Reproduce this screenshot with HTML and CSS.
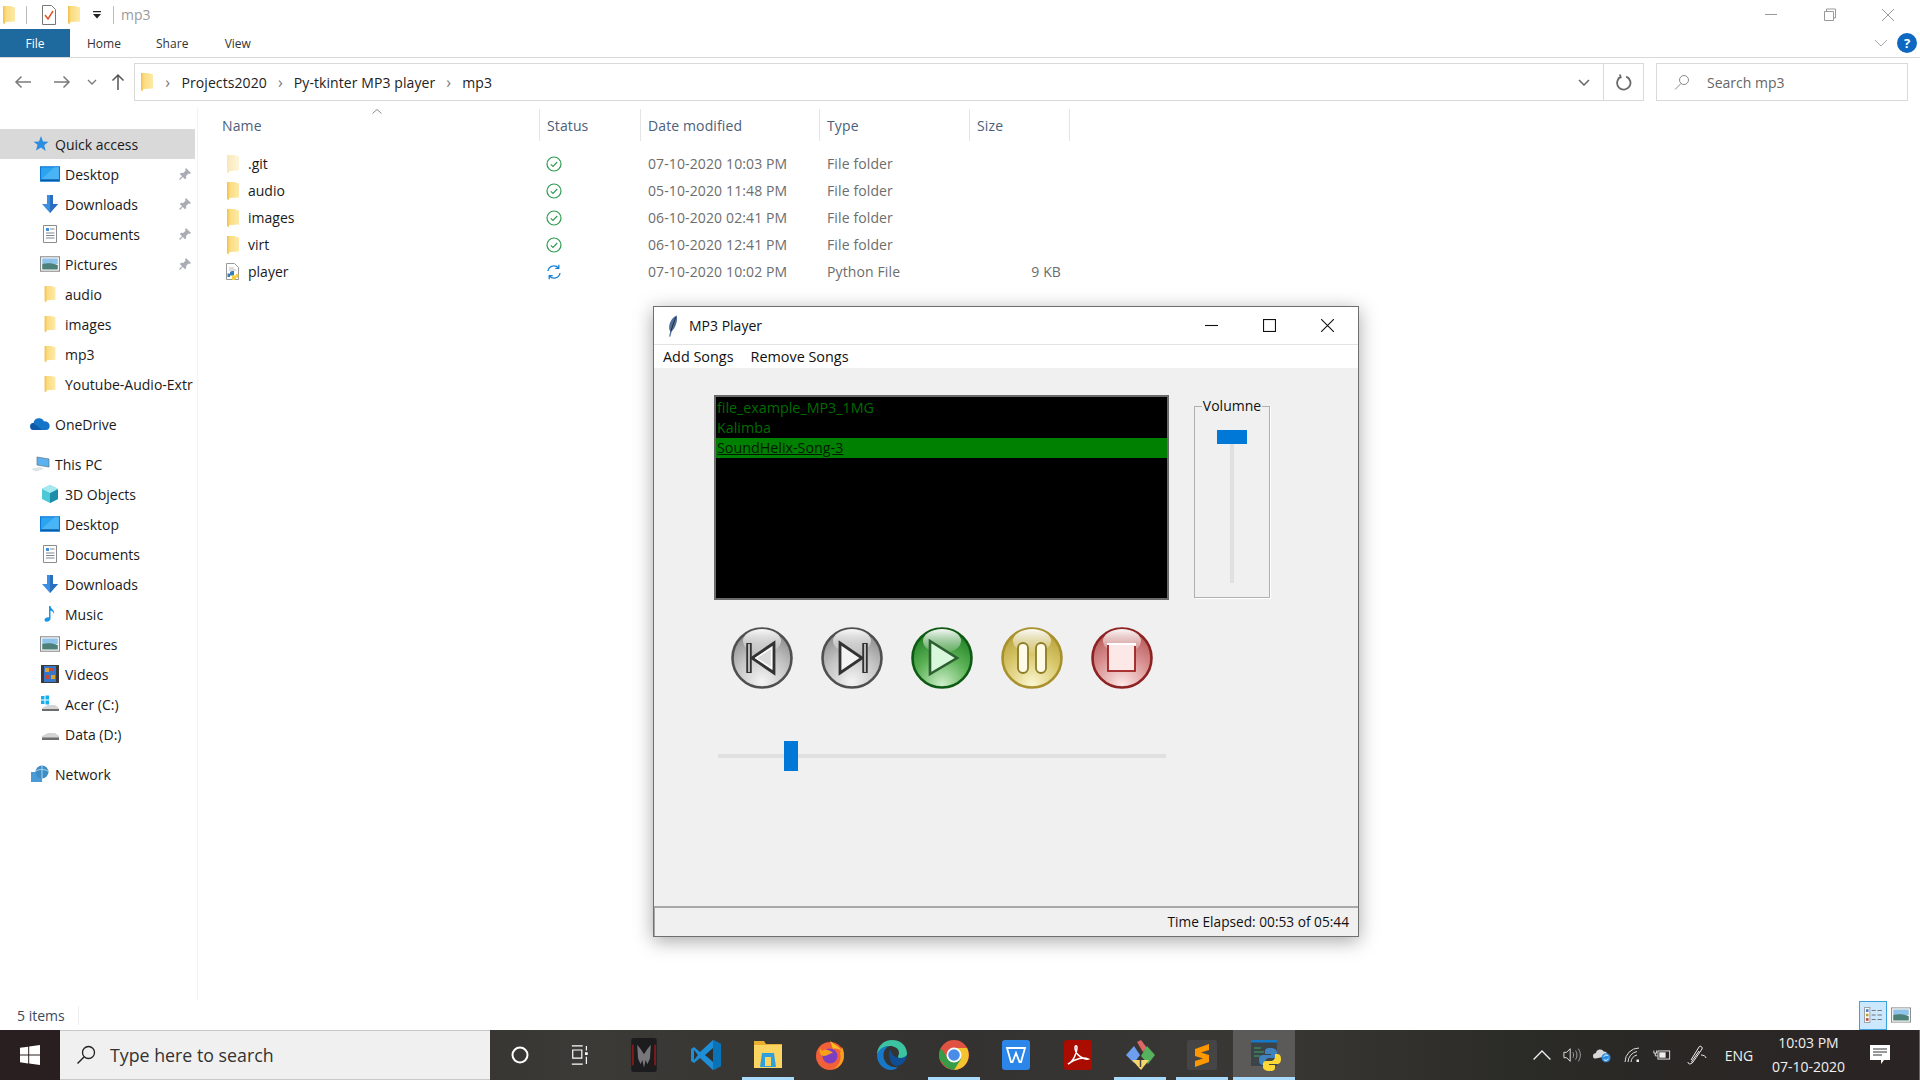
FILE: index.html
```html
<!DOCTYPE html>
<html lang="en">
<head>
<meta charset="utf-8">
<title>mp3</title>
<link rel="stylesheet" href="styles.css">
</head>
<body>
<svg class="defs" aria-hidden="true">
  <defs>
    <linearGradient id="fold" x1="0" y1="0" x2="1" y2="0"><stop offset="0" stop-color="#eebf4e"/><stop offset=".25" stop-color="#fbdc7f"/><stop offset="1" stop-color="#fde9a8"/></linearGradient>
    <linearGradient id="foldp" x1="0" y1="0" x2="1" y2="0"><stop offset="0" stop-color="#f8e8b8"/><stop offset="1" stop-color="#fdf5dc"/></linearGradient>
    <symbol id="folder" viewBox="0 0 14 20"><path d="M1 1h7l5 1.500V16.500L3.500 17 2.500 19.500 1 18z" fill="url(#fold)"/></symbol>
    <symbol id="folderp" viewBox="0 0 14 20"><path d="M1 1h7l5 1.500V16.500L3.500 17 2.500 19.500 1 18z" fill="url(#foldp)"/></symbol>
    <symbol id="pin" viewBox="0 0 14 14"><path d="M8 1l5 5-1.500 1-1-.5-2.500 2.500.3 2L7 12.300 4.800 10 2 13 1 12l3-2.800L1.800 7 3.200 5.700l2 .3L7.700 3.500 7 2.500z" fill="#a9adb3"/></symbol>
    <symbol id="desk" viewBox="0 0 18 14"><rect width="18" height="14" fill="#0a78d7"/><path d="M1 1h16v11H1z" fill="#2da4f0"/><path d="M1 12L13 1h4v11z" fill="#49b4f6"/><path d="M1 12h16v1H1z" fill="#024a8c"/></symbol>
    <symbol id="down" viewBox="0 0 18 18"><path d="M6 0h6v9h5l-8 9-8-9h5z" fill="#3c8fe0"/><path d="M9 0h3v9h5l-8 9z" fill="#2a6fbf"/></symbol>
    <symbol id="docs" viewBox="0 0 14 18"><path d="M.5.500h13v17H.5z" fill="#fff" stroke="#8c8c8c"/><path d="M3 3h3v3H3z" fill="#3c8fe0"/><path d="M7 4h4.500M3 8h8.500M3 10.500h8.500M3 13h8.500" stroke="#7d8794"/></symbol>
    <symbol id="pics" viewBox="0 0 18 14"><rect x=".5" y=".5" width="17" height="13" fill="#fff" stroke="#8e8e8e"/><rect x="2" y="2" width="14" height="5" fill="#8fc3ea"/><path d="M2 7c4-1 9-1 14 1v4H2z" fill="#4d8079"/></symbol>
  </defs>
</svg>

<div class="explorer">
  <div class="titlebar">
    <svg class="ic-folder qat-first"><use href="#folder"/></svg>
    <span class="qat-sep"></span>
    <svg class="qat-doc" viewBox="0 0 14 20"><path d="M.5.5h9l4 4v15H.5z" fill="#fff" stroke="#777"/><path d="M3 10l3 4 5-8" fill="none" stroke="#e2542a" stroke-width="1.500"/></svg>
    <svg class="ic-folder qat-second"><use href="#folder"/></svg>
    <svg class="qat-arrow" viewBox="0 0 8 8"><path d="M0 0h8v1.200H0zM0 3h8L4 7.500z" fill="#222"/></svg>
    <span class="qat-sep qat-sep2"></span>
    <span class="wintitle">mp3</span>
    <div class="wincontrols">
      <svg viewBox="0 0 14 14"><path d="M1 6.500h12" stroke="#999"/></svg>
      <svg viewBox="0 0 14 14"><path d="M3.500 3V1h9v9h-2M1.500 3.500h9v9h-9z" fill="none" stroke="#999"/></svg>
      <svg viewBox="0 0 14 14"><path d="M1 1l12 12M13 1L1 13" stroke="#999"/></svg>
    </div>
  </div>

  <div class="ribbon">
    <span class="tab tab-file">File</span>
    <span class="tab tab-home">Home</span>
    <span class="tab tab-share">Share</span>
    <span class="tab tab-view">View</span>
    <svg class="ribbon-chev" viewBox="0 0 14 8"><path d="M1 1l6 6 6-6" fill="none" stroke="#a8a8a8"/></svg>
    <span class="help">?</span>
  </div>

  <div class="addrrow">
    <div class="navbtns">
      <svg class="nb nb-back" viewBox="0 0 18 14"><path d="M17 7H2M7.500 1.500L2 7l5.500 5.500" fill="none" stroke="#7a7a7a" stroke-width="1.500"/></svg>
      <svg class="nb nb-fwd" viewBox="0 0 18 14"><path d="M1 7h15M10.500 1.500L16 7l-5.500 5.500" fill="none" stroke="#7a7a7a" stroke-width="1.500"/></svg>
      <svg class="nb nb-drop" viewBox="0 0 10 6"><path d="M1 1l4 4 4-4" fill="none" stroke="#7a7a7a" stroke-width="1.300"/></svg>
      <svg class="nb nb-up" viewBox="0 0 14 18"><path d="M7 17V2M1.500 7.500L7 2l5.500 5.500" fill="none" stroke="#555" stroke-width="1.500"/></svg>
    </div>
    <div class="addr">
      <svg class="ic-folder addr-folder"><use href="#folder"/></svg>
      <span class="crumb-chev first">›</span>
      <span class="crumb">Projects2020</span>
      <span class="crumb-chev">›</span>
      <span class="crumb">Py-tkinter MP3 player</span>
      <span class="crumb-chev">›</span>
      <span class="crumb">mp3</span>
      <svg class="addr-drop" viewBox="0 0 12 7"><path d="M1 1l5 5 5-5" fill="none" stroke="#666" stroke-width="1.500"/></svg>
      <span class="addr-refresh">
        <svg viewBox="0 0 16 16"><path d="M5 3A6.300 6.300 0 1 0 10.500 2.500M4.600 .5l.8 2.700-2.700.8" fill="none" stroke="#6a6a6a" stroke-width="1.700"/></svg>
      </span>
    </div>
    <div class="search">
      <svg viewBox="0 0 16 16"><circle cx="10" cy="6" r="4.500" fill="none" stroke="#8a8a8a"/><path d="M7 9.500L1 15.500" stroke="#8a8a8a"/></svg>
      <span>Search mp3</span>
    </div>
  </div>

  <div class="main">
    <nav class="sidebar">
      <div class="row row-top row-on"><svg class="ic" viewBox="0 0 18 18"><path d="M10 1l2 5.500 5.500.3-4.300 3.500 1.500 5.700L10 12.500 5 15.500l1.500-5.700L2.500 6.800 8 6.500z" fill="#2d8de0"/></svg><span>Quick access</span></div>
      <div class="row row-sub"><svg class="ic"><use href="#desk"/></svg><span>Desktop</span><svg class="pin"><use href="#pin"/></svg></div>
      <div class="row row-sub"><svg class="ic"><use href="#down"/></svg><span>Downloads</span><svg class="pin"><use href="#pin"/></svg></div>
      <div class="row row-sub"><svg class="ic"><use href="#docs"/></svg><span>Documents</span><svg class="pin"><use href="#pin"/></svg></div>
      <div class="row row-sub"><svg class="ic"><use href="#pics"/></svg><span>Pictures</span><svg class="pin"><use href="#pin"/></svg></div>
      <div class="row row-sub"><svg class="ic"><use href="#folder"/></svg><span>audio</span></div>
      <div class="row row-sub"><svg class="ic"><use href="#folder"/></svg><span>images</span></div>
      <div class="row row-sub"><svg class="ic"><use href="#folder"/></svg><span>mp3</span></div>
      <div class="row row-sub"><svg class="ic"><use href="#folder"/></svg><span>Youtube-Audio-Extr</span></div>
      <div class="row row-top gap"><svg class="ic" viewBox="0 0 20 14"><path d="M4 13a3.500 3.500 0 0 1-.5-7 5.500 5.500 0 0 1 10.500-1.500A4.500 4.500 0 0 1 19.500 10 3.500 3.500 0 0 1 16 13z" fill="#1474c8"/><path d="M4 13a3.500 3.500 0 0 1-.5-7L12 13z" fill="#0f5aa8"/></svg><span>OneDrive</span></div>
      <div class="row row-top gap"><svg class="ic" viewBox="0 0 20 16"><path d="M7 1l12 2v8L7 9z" fill="#5cb2ee" stroke="#5d7487" stroke-width=".7"/><path d="M1 13l9-2 4 2-8 2.500z" fill="#dfe3e6"/></svg><span>This PC</span></div>
      <div class="row row-sub"><svg class="ic" viewBox="0 0 18 18"><path d="M9 0l8 4v10l-8 4-8-4V4z" fill="#4cc7d6"/><path d="M9 8l8-4v10l-8 4z" fill="#1b8da8"/><path d="M9 0l8 4-8 4-8-4z" fill="#a5e9f0"/></svg><span>3D Objects</span></div>
      <div class="row row-sub"><svg class="ic"><use href="#desk"/></svg><span>Desktop</span></div>
      <div class="row row-sub"><svg class="ic"><use href="#docs"/></svg><span>Documents</span></div>
      <div class="row row-sub"><svg class="ic"><use href="#down"/></svg><span>Downloads</span></div>
      <div class="row row-sub"><svg class="ic" viewBox="0 0 18 18"><path d="M8 1h1.500c.3 3 4.500 4 3.500 8-.5-2-2-3-3.500-3.300V14c0 2.500-6 4-6 1 0-2 3-3 4.500-2.500z" fill="#1a96e8"/></svg><span>Music</span></div>
      <div class="row row-sub"><svg class="ic"><use href="#pics"/></svg><span>Pictures</span></div>
      <div class="row row-sub"><svg class="ic" viewBox="0 0 18 18"><rect width="18" height="18" fill="#3a3a3a"/><rect x="3" y="1" width="12" height="16" fill="#3776c9"/><path d="M4 3h4v4H4zM10 10h4v4h-4z" fill="#d9a33a"/><path d="M9 3h4v3H9zM4 10h4v4H4z" fill="#c04a3c"/></svg><span>Videos</span></div>
      <div class="row row-sub"><svg class="ic" viewBox="0 0 20 18"><path d="M1 1h3.500v3.500H1zM5.500 .5H9v4H5.500zM1 5.500h3.500V9H1zM5.500 5.500H9v4H5.500z" fill="#14b0ee"/><path d="M2 13l6-3h7l4 3v3H2z" fill="#d4d4d4"/><path d="M2 14h17v2H2z" fill="#6d6d6d"/></svg><span>Acer (C:)</span></div>
      <div class="row row-sub"><svg class="ic" viewBox="0 0 20 18"><path d="M2 11l6-3h7l4 3v3H2z" fill="#d4d4d4"/><path d="M2 12.500h17v2.500H2z" fill="#6d6d6d"/></svg><span>Data (D:)</span></div>
      <div class="row row-top gap"><svg class="ic" viewBox="0 0 20 18"><rect x="1" y="7" width="11" height="10" fill="#4b9ad8"/><circle cx="12" cy="7" r="6.500" fill="#3d8cc4"/><path d="M6 6c3-2 8-2 12 0M12 .5v13" stroke="#a8d6ee" fill="none"/></svg><span>Network</span></div>
    </nav>

    <section class="files">
      <div class="fhead">
        <div class="fh fh-name">Name<svg class="sort" viewBox="0 0 10 5"><path d="M.5 4.500L5 .5l4.500 4" fill="none" stroke="#888"/></svg></div>
        <div class="fh">Status</div>
        <div class="fh">Date modified</div>
        <div class="fh">Type</div>
        <div class="fh">Size</div>
      </div>
      <div class="frow">
        <div class="fname"><svg class="ficon"><use href="#folderp"/></svg>.git</div>
        <div class="fstatus"><svg viewBox="0 0 16 16"><circle cx="8" cy="8" r="7" fill="none" stroke="#2e9a50" stroke-width="1.200"/><path d="M4.800 8.300l2.200 2.200 4.200-4.500" fill="none" stroke="#2e9a50" stroke-width="1.100"/></svg></div>
        <div class="fmeta">07-10-2020 10:03 PM</div><div class="fmeta">File folder</div><div class="fmeta fsize"></div>
      </div>
      <div class="frow">
        <div class="fname"><svg class="ficon"><use href="#folder"/></svg>audio</div>
        <div class="fstatus"><svg viewBox="0 0 16 16"><circle cx="8" cy="8" r="7" fill="none" stroke="#2e9a50" stroke-width="1.200"/><path d="M4.800 8.300l2.200 2.200 4.200-4.500" fill="none" stroke="#2e9a50" stroke-width="1.100"/></svg></div>
        <div class="fmeta">05-10-2020 11:48 PM</div><div class="fmeta">File folder</div><div class="fmeta fsize"></div>
      </div>
      <div class="frow">
        <div class="fname"><svg class="ficon"><use href="#folder"/></svg>images</div>
        <div class="fstatus"><svg viewBox="0 0 16 16"><circle cx="8" cy="8" r="7" fill="none" stroke="#2e9a50" stroke-width="1.200"/><path d="M4.800 8.300l2.200 2.200 4.200-4.500" fill="none" stroke="#2e9a50" stroke-width="1.100"/></svg></div>
        <div class="fmeta">06-10-2020 02:41 PM</div><div class="fmeta">File folder</div><div class="fmeta fsize"></div>
      </div>
      <div class="frow">
        <div class="fname"><svg class="ficon"><use href="#folder"/></svg>virt</div>
        <div class="fstatus"><svg viewBox="0 0 16 16"><circle cx="8" cy="8" r="7" fill="none" stroke="#2e9a50" stroke-width="1.200"/><path d="M4.800 8.300l2.200 2.200 4.200-4.500" fill="none" stroke="#2e9a50" stroke-width="1.100"/></svg></div>
        <div class="fmeta">06-10-2020 12:41 PM</div><div class="fmeta">File folder</div><div class="fmeta fsize"></div>
      </div>
      <div class="frow">
        <div class="fname"><svg class="ficon" viewBox="0 0 14 20"><path d="M.5 1.500h8l4 4v12H.5z" fill="#fff" stroke="#999"/><path d="M3 6h5M3 8h7" stroke="#bbb"/><path d="M7 9c-3 0-3 1-3 2.500H1.500V15H4v-1.500h4V9z" fill="#3b7cb5"/><path d="M7 18c3 0 3-1 3-2.500h2.500V12H10v1.500H6V18z" fill="#f5cc3c"/></svg>player</div>
        <div class="fstatus"><svg viewBox="0 0 16 16"><path d="M2 7a6 6 0 0 1 10.500-3M14 9a6 6 0 0 1-10.500 3M12.800 .8v3.500H9.300M3.200 15.200v-3.500h3.500" fill="none" stroke="#1a83d6" stroke-width="1.300"/></svg></div>
        <div class="fmeta">07-10-2020 10:02 PM</div><div class="fmeta">Python File</div><div class="fmeta fsize">9 KB</div>
      </div>
    </section>
  </div>

  <div class="statusbar">
    <span class="count">5 items</span>
    <div class="viewbtns">
      <span class="vb vb-on"><svg viewBox="0 0 20 18"><rect x=".5" y=".5" width="6" height="17" fill="#fff" stroke="#999"/><path d="M2 2.500h3v3H2z" fill="#4a7cb8"/><path d="M2 7.500h3v3H2z" fill="#b5a044"/><path d="M2 12.500h3v3H2z" fill="#b84a3a"/><path d="M8.500 4h4.500M15 4h5M8.500 9h4.500M15 9h5M8.500 14h4.500M15 14h5" stroke="#777" stroke-width="1.200"/></svg></span>
      <span class="vb"><svg viewBox="0 0 18 14"><use href="#pics"/></svg></span>
    </div>
  </div>
</div>

<div class="tkwin">
  <div class="tk-title">
    <svg class="tk-feather" viewBox="0 0 10 20"><path d="M8.500 .5C4 2 1.500 7 1.500 12c0 1.500.5 2 1 2.500L1.500 19.500l1 .2 1.300-4.700C7 12 9.500 6 8.500 .5z" fill="#4f6f9a"/><path d="M7.500 2C6 6 4.500 10 3 15" stroke="#111" stroke-width=".6"/></svg>
    <span class="tk-name">MP3 Player</span>
    <div class="tk-controls">
      <svg viewBox="0 0 12 12"><path d="M0 6h12" stroke="#111"/></svg>
      <svg viewBox="0 0 12 12"><rect x=".5" y=".5" width="11" height="11" fill="none" stroke="#111"/></svg>
      <svg viewBox="0 0 12 12"><path d="M0 0l12 12M12 0L0 12" stroke="#111"/></svg>
    </div>
  </div>
  <div class="tk-menu"><span>Add Songs</span><span>Remove Songs</span></div>
  <div class="tk-body">
    <div class="tk-top">
      <div class="listbox">
        <div class="song">file_example_MP3_1MG</div>
        <div class="song">Kalimba</div>
        <div class="song song-on">SoundHelix-Song-3</div>
      </div>
      <fieldset class="volume">
        <legend>Volumne</legend>
        <div class="vslider"><span class="vthumb"></span><span class="vtrack"></span></div>
      </fieldset>
    </div>
    <div class="controls">
      <svg class="cbtn" viewBox="0 0 64 64">
        <defs>
          <radialGradient id="gGray" cx=".5" cy=".9" r=".9"><stop offset="0" stop-color="#f4f4f4"/><stop offset=".55" stop-color="#c0c0c0"/><stop offset="1" stop-color="#858585"/></radialGradient>
          <radialGradient id="gGreen" cx=".5" cy=".95" r=".95"><stop offset="0" stop-color="#cdeec8"/><stop offset=".5" stop-color="#5cb256"/><stop offset="1" stop-color="#177a1c"/></radialGradient>
          <radialGradient id="gYellow" cx=".5" cy=".95" r=".95"><stop offset="0" stop-color="#fbf6d0"/><stop offset=".55" stop-color="#d8c76a"/><stop offset="1" stop-color="#b59e34"/></radialGradient>
          <radialGradient id="gRed" cx=".5" cy=".95" r=".95"><stop offset="0" stop-color="#fde8e8"/><stop offset=".55" stop-color="#d88f8f"/><stop offset="1" stop-color="#b25252"/></radialGradient>
          <linearGradient id="gShine" x1="0" y1="0" x2="0" y2="1"><stop offset="0" stop-color="#fff" stop-opacity=".95"/><stop offset="1" stop-color="#fff" stop-opacity=".1"/></linearGradient>
          <filter id="soft" x="-10%" y="-10%" width="120%" height="120%"><feGaussianBlur stdDeviation=".6"/></filter>
        </defs>
        <g filter="url(#soft)">
          <circle cx="32" cy="32" r="29.500" fill="url(#gGray)" stroke="#505050" stroke-width="2.600"/>
          <ellipse cx="32" cy="15" rx="19" ry="12" fill="url(#gShine)"/>
          <path d="M19 17v30" stroke="#333" stroke-width="5.500"/>
          <path d="M44 17v30L22 32z" fill="#dcdcdc" stroke="#333" stroke-width="2.800"/>
          <path d="M19 18v28M41.500 22v20L26 32z" fill="none" stroke="#fff" stroke-width="1.300"/>
        </g>
      </svg>
      <svg class="cbtn" viewBox="0 0 64 64">
        <g filter="url(#soft)">
          <circle cx="32" cy="32" r="29.500" fill="url(#gGray)" stroke="#505050" stroke-width="2.600"/>
          <ellipse cx="32" cy="15" rx="19" ry="12" fill="url(#gShine)"/>
          <path d="M20 17v30l22-15z" fill="#f4f4f4" stroke="#333" stroke-width="2.800"/>
          <path d="M45 17v30" stroke="#333" stroke-width="5.500"/>
          <path d="M45 18v28" stroke="#fff" stroke-width="1.300"/>
        </g>
      </svg>
      <svg class="cbtn" viewBox="0 0 64 64">
        <g filter="url(#soft)">
          <circle cx="32" cy="32" r="29.500" fill="url(#gGreen)" stroke="#0e5a12" stroke-width="2.600"/>
          <ellipse cx="32" cy="15" rx="19" ry="12" fill="url(#gShine)"/>
          <path d="M20 15v33l27-16z" fill="#d8f8dc" stroke="#2d5f30" stroke-width="2.600"/>
        </g>
      </svg>
      <svg class="cbtn" viewBox="0 0 64 64">
        <g filter="url(#soft)">
          <circle cx="32" cy="32" r="29.500" fill="url(#gYellow)" stroke="#a8902c" stroke-width="2.600"/>
          <ellipse cx="32" cy="15" rx="19" ry="12" fill="url(#gShine)"/>
          <rect x="18" y="17" width="10" height="30" rx="5" fill="#fffbe6" stroke="#8d7b28" stroke-width="1.800"/>
          <rect x="36" y="17" width="10" height="30" rx="5" fill="#fffbe6" stroke="#8d7b28" stroke-width="1.800"/>
        </g>
      </svg>
      <svg class="cbtn" viewBox="0 0 64 64">
        <g filter="url(#soft)">
          <circle cx="32" cy="32" r="29.500" fill="url(#gRed)" stroke="#8c2020" stroke-width="2.600"/>
          <ellipse cx="32" cy="15" rx="19" ry="12" fill="url(#gShine)"/>
          <rect x="18" y="18" width="27" height="27" fill="#fde8e8" stroke="#a02222" stroke-width="1.800"/>
          <path d="M17 18h29M45 17v3" stroke="#fff" stroke-width="1.800"/>
        </g>
      </svg>
    </div>
    <div class="hslider"><span class="hthumb"></span></div>
    <div class="tk-status">Time Elapsed: 00:53 of 05:44</div>
  </div>
</div>

<footer class="taskbar">
  <span class="tb-start"><svg viewBox="0 0 20 20"><path d="M0 2.800l8.200-1.100v7.900H0zM9.200 1.500L20 0v9.600H9.200zM0 10.600h8.200v7.800L0 17.300zM9.200 10.600H20V20L9.200 18.500z" fill="#fff"/></svg></span>
  <div class="tb-search">
    <svg viewBox="0 0 20 20"><circle cx="12.500" cy="7.500" r="6" fill="none" stroke="#222" stroke-width="1.300"/><path d="M8 12L1.500 18.500" stroke="#222" stroke-width="1.500"/></svg>
    <span>Type here to search</span>
  </div>
  <span class="tb-slot tb-sys"><svg viewBox="0 0 20 20"><circle cx="10" cy="10" r="7.500" fill="none" stroke="#fff" stroke-width="2"/></svg></span>
  <span class="tb-slot tb-sys"><svg viewBox="0 0 22 22"><path d="M2 1h12M2 21h12M3 5.500h10v9H3z" fill="none" stroke="#fff" stroke-width="1.300"/><path d="M18 1v5M18 13v8" stroke="#fff" stroke-width="1.300"/><rect x="16.500" y="8" width="3" height="3" fill="#fff"/></svg></span>
  <div class="tb-apps">
    <span class="app"><svg viewBox="0 0 32 40"><rect width="30" height="40" x="1" rx="3" fill="#1c1c1e"/><path d="M3 8v24M29 8v24" stroke="#b01818" stroke-width="1.500"/><path d="M8 8l4 5 4 6 4-6 4-5-1 16-3 7-2-5-2 9-2-9-2 5-3-7z" fill="#77777b"/></svg></span>
    <span class="app"><svg viewBox="0 0 32 32"><path d="M23 1l8 4v22l-8 4-13-12-6 5-3-2v-12l3-2 6 5z" fill="#1d8fd8"/><path d="M23 1v30l8-4V5z" fill="#0a73b8"/><path d="M23 9l-8 7 8 7z" fill="#2f2f2d"/><path d="M4 11l4 5-4 5z" fill="#333"/></svg></span>
    <span class="app app-run"><svg viewBox="0 0 32 32"><path d="M2 2h10l2 3h16v24H2z" fill="#e8b02e"/><path d="M2 6h28v23H2z" fill="#fbd561"/><path d="M10 14h12l2 14H8z" fill="#2fa0dc"/><path d="M13 18h6v9h-6z" fill="#fbd561"/></svg></span>
    <span class="app"><svg viewBox="0 0 32 32"><circle cx="16" cy="17" r="14" fill="#f2603a"/><path d="M28 8c4 8 2 20-9 22 6-3 9-9 7-16z" fill="#f9a01b"/><path d="M16 1c2 4 8 5 12 11-3-2-6-3-9-2z" fill="#fcc21b"/><circle cx="16" cy="17" r="7.500" fill="#7d3fc2"/><path d="M6 9c-1 4 0 8 4 8s5-3 9-3c-4-4-9-4-11-2z" fill="#f9a01b"/></svg></span>
    <span class="app"><svg viewBox="0 0 32 32"><path d="M1 16C1 7 8 1 16 1c9 0 15 6 15 14 0 5-8 6-9 3 0-2 1-2 1-4 0-5-5-7-9-7C8 7 3 11 1 16z" fill="#3cc3a0"/><path d="M1 16C3 9 9 7 13 7c-6 3-6 9-5 13 2 6 8 9 14 8-2 2-4 3-7 3C7 31 1 24 1 16z" fill="#1878c8"/><path d="M13 14c0-2 1-3 2-3 0 4 4 8 9 8 3 0 5-1 7-3-1 7-6 11-10 11-5 0-8-6-8-13z" fill="#0f4e94"/></svg></span>
    <span class="app app-run"><svg viewBox="0 0 32 32"><circle cx="16" cy="16" r="15" fill="#e05242"/><path d="M16 16L3.500 24A15 15 0 0 1 3 9l7 11z" fill="#379c48"/><path d="M16 31a15 15 0 0 0 13-22H16l6 10z" fill="#f4c430"/><path d="M4 23a15 15 0 0 0 12 8l7-11-7-4z" fill="#379c48"/><circle cx="16" cy="16" r="7.500" fill="#fff"/><circle cx="16" cy="16" r="5.800" fill="#4a8de8"/></svg></span>
    <span class="app"><svg viewBox="0 0 32 32"><rect x="2" y="1" width="28" height="30" rx="3" fill="#2c85e8"/><path d="M7 9h18l-4 14h-1.500L16 14l-3.500 9H11z" fill="none" stroke="#fff" stroke-width="1.800"/></svg></span>
    <span class="app"><svg viewBox="0 0 32 32"><rect x="2" y="1" width="28" height="30" rx="3" fill="#ab0c00"/><path d="M6 25c5-2 9-11 9-16 0-3-2-3-2 0 0 6 8 12 13 11-4-2-12-1-20 5z" fill="none" stroke="#fff" stroke-width="1.500"/></svg></span>
    <span class="app app-run"><svg viewBox="0 0 32 32"><path d="M2 16l8-9 6 9-6 8z" fill="#6d9ef0"/><path d="M13 3l4-2 6 8-4 4z" fill="#e06666"/><path d="M23 7l8 9-7 9-7-8z" fill="#55b25d"/><path d="M8 21h17l-8 10z" fill="#f5d76e"/><path d="M16.500 21v7" stroke="#444" stroke-width="1.500"/></svg></span>
    <span class="app app-run"><svg viewBox="0 0 32 32"><rect x="1" y="1" width="30" height="30" rx="2" fill="#454545"/><path d="M23 5L9 10v7l8 2.500L9 22v6l14-5v-7l-8-2.500L23 11z" fill="#ff9800"/></svg></span>
    <span class="app app-run app-cur"><svg class="py" viewBox="0 0 32 34"><rect x="1" y="2" width="26" height="26" fill="#3b4448"/><rect x="1" y="2" width="26" height="2.500" fill="#1878c8"/><path d="M4 10h7M4 14h10M4 18h6" stroke="#3ca860"/><path d="M20 10c-5 0-5 2-5 4v2h6v1h-8c-2 0-4 1-4 5s2 5 4 5h2v-3c0-2 2-4 4-4h5c2 0 3-1 3-3v-3c0-2-2-4-7-4z" fill="#3f82bd"/><path d="M20 33c5 0 5-2 5-4v-2h-6v-1h8c2 0 4-1 4-5s-2-5-4-5h-2v3c0 2-2 4-4 4h-5c-2 0-3 1-3 3v3c0 2 2 4 7 4z" fill="#fdd835"/></svg></span>
  </div>
  <div class="tray">
    <span class="t-slot"><svg viewBox="0 0 16 10"><path d="M.5 9L8 1.500 15.500 9" fill="none" stroke="#eee" stroke-width="1.200"/></svg></span>
    <span class="t-slot"><svg viewBox="0 0 20 16"><path d="M1 5h3l4-4v14l-4-4H1z" fill="none" stroke="#eee"/><path d="M11 5c1 2 1 4 0 6M14 3c2 3 2 7 0 10M17 1c3 4 3 10 0 14" fill="none" stroke="#aaa"/></svg></span>
    <span class="t-slot"><svg viewBox="0 0 20 16"><path d="M3 12a3 3 0 0 1 0-6 5 5 0 0 1 9-2 4 4 0 0 1 4 5z" fill="#d8d8d8"/><circle cx="14.500" cy="11" r="5" fill="#2d8de0"/><path d="M12 10a3 3 0 0 1 5-1M17 12a3 3 0 0 1-5 1" stroke="#fff" fill="none"/></svg></span>
    <span class="t-slot"><svg viewBox="0 0 16 16"><path d="M1 15A14 14 0 0 1 15 1M4 15A11 11 0 0 1 13 4.500M7 15a8 8 0 0 1 6-7" fill="none" stroke="#ddd"/><rect x="12.500" y="12.500" width="2.500" height="2.500" fill="#eee"/></svg></span>
    <span class="t-slot"><svg viewBox="0 0 20 12"><path d="M1 1v3h3V1M2.500 4v3H5" fill="none" stroke="#eee"/><rect x="5.500" y="1.500" width="13" height="9" fill="none" stroke="#eee"/><rect x="7" y="3" width="7" height="6" fill="#eee"/></svg></span>
    <span class="t-pen"><svg viewBox="0 0 20 20"><path d="M1 17c0 3 4 2 5 0l9-13c1-2-2-4-3-2L4 15M6 17c-1 1-2 0-1-1l7-10" fill="none" stroke="#eee"/><path d="M14 10c2 0 5 1 5 3" fill="none" stroke="#eee"/></svg></span>
    <span class="t-lang">ENG</span>
    <span class="t-clock"><span>10:03 PM</span><span>07-10-2020</span></span>
    <span class="t-notif"><svg viewBox="0 0 20 20"><path d="M0 0h20v15H14l-3 4v-4H0z" fill="#fff"/><path d="M3 4h14M3 7h14M3 10h9" stroke="#333"/></svg></span>
    <span class="t-end"></span>
  </div>
</footer>
</body>
</html>
```

FILE: styles.css
```css
* { box-sizing: border-box; }
html, body { margin: 0; height: 100%; }
body {
  width: 1920px; height: 1080px; overflow: hidden; position: relative;
  display: flex; flex-direction: column; background: #fff;
  font-family: "Open Sans", "Noto Sans", sans-serif; font-size: 14px; color: #1a1a1a;
}
svg { display: block; }
.defs { position: absolute; width: 0; height: 0; }

.explorer { flex: 1; display: flex; flex-direction: column; min-height: 0; }

.titlebar { height: 29px; display: flex; align-items: center; flex-shrink: 0; }
.ic-folder { width: 14px; height: 20px; }
.qat-first { margin-left: 2px; }
.qat-sep { width: 1px; height: 18px; background: #bbb; margin-left: 10px; }
.qat-doc { width: 14px; height: 20px; margin-left: 15px; }
.qat-second { margin-left: 11px; }
.qat-arrow { width: 8px; height: 8px; margin-left: 12px; }
.qat-sep2 { margin-left: 12px; }
.wintitle { margin-left: 7px; color: #9a9a9a; font-size: 14px; }
.wincontrols { margin-left: auto; display: flex; gap: 44.5px; margin-right: 25px; align-items: center; }
.wincontrols svg { width: 14px; height: 14px; }

.ribbon { height: 29px; display: flex; align-items: center; border-bottom: 1px solid #d9d9d9; flex-shrink: 0; font-size: 12px; color: #333; }
.tab-file { width: 70px; height: 28px; background: #1e6a9e; color: #fff; display: flex; align-items: center; justify-content: center; }
.tab-home { margin-left: 17px; }
.tab-share { margin-left: 35px; letter-spacing: .1px; }
.tab-view { margin-left: 36px; }
.ribbon-chev { width: 14px; height: 8px; margin-left: auto; }
.help { width: 20px; height: 20px; border-radius: 50%; background: #0e67c0; color: #fff; font-weight: 700; font-size: 13px; margin: 0 3px 0 9px; display: flex; align-items: center; justify-content: center; }

.addrrow { height: 50px; padding-top: 5px; display: flex; align-items: flex-start; flex-shrink: 0; }
.navbtns { width: 134px; height: 38px; display: flex; align-items: center; }
.nb-back { width: 18px; height: 14px; margin-left: 14px; }
.nb-fwd { width: 18px; height: 14px; margin-left: 21px; }
.nb-drop { width: 10px; height: 6px; margin-left: 16px; }
.nb-up { width: 14px; height: 18px; margin-left: 14px; }
.addr { width: 1510px; height: 38px; border: 1px solid #d9d9d9; display: flex; align-items: center; font-size: 14px; }
.addr-folder { margin-left: 5px; }
.crumb-chev { width: 27px; text-align: center; color: #777; font-size: 16px; line-height: 1; }
.crumb-chev.first { margin-left: 0; width: 27.5px; }
.crumb { color: #222; letter-spacing: .08px; }
.addr-drop { width: 12px; height: 7px; margin-left: auto; }
.addr-refresh { width: 40px; height: 100%; margin-left: 13px; border-left: 1px solid #d9d9d9; display: flex; align-items: center; justify-content: center; }
.addr-refresh svg { width: 17px; height: 17px; }
.search { width: 252px; height: 38px; margin-left: 12px; border: 1px solid #d9d9d9; display: flex; align-items: center; color: #666; font-size: 14px; }
.search svg { width: 16px; height: 16px; margin: 0 17px 0 17px; }

.main { flex: 1; display: flex; min-height: 0; }
.sidebar { width: 198px; padding-top: 21px; border-right: 1px solid #f2f2f2; flex-shrink: 0; }
.row { height: 30px; width: 195px; display: flex; align-items: center; position: relative; white-space: nowrap; }
.row-on { background: #d9d9d9; }
.gap { margin-top: 10px; }
.row-top { padding-left: 30px; }
.row-sub { padding-left: 40px; }
.row .ic { width: 20px; height: 18px; margin-right: 5px; flex-shrink: 0; }
.row .pin { width: 14px; height: 14px; position: absolute; right: 3px; top: 8px; }

.files { flex: 1; padding-top: 1px; }
.fhead, .frow { display: grid; grid-template-columns: 342px 101px 179px 150px 100px; }
.fhead { height: 32px; color: #4c607a; font-size: 14px; margin-bottom: 9px; letter-spacing: .12px; }
.fh { border-right: 1px solid #e5e5e5; padding-left: 7px; display: flex; align-items: center; position: relative; }
.fh-name { padding-left: 24px; }
.sort { position: absolute; width: 10px; height: 5px; left: 174px; top: 0; }
.frow { height: 27px; align-items: center; }
.fname { padding-left: 28px; display: flex; align-items: center; color: #1a1a1a; }
.ficon { width: 14px; height: 20px; margin-right: 8px; }
.fstatus { padding-left: 6px; }
.fstatus svg { width: 16px; height: 16px; }
.fmeta { color: #6d6d6d; padding-left: 7px; letter-spacing: .12px; }
.fsize { text-align: right; padding-right: 9px; }

.statusbar { height: 30px; display: flex; align-items: center; flex-shrink: 0; font-size: 14px; color: #3a4a5c; }
.count { margin-left: 17px; padding-right: 13px; border-right: 1px solid #eee; }
.viewbtns { margin-left: auto; display: flex; align-items: center; margin-right: 5px; height: 30px; }
.vb { width: 28px; height: 29px; display: flex; align-items: center; justify-content: center; }
.vb svg { width: 20px; height: 16px; }
.vb-on { background: #cce8ff; border: 1px solid #3ca0dc; }

.tkwin { position: absolute; left: 653px; top: 306px; width: 706px; height: 631px; background: #f0f0f0; border: 1px solid #6f6f6f; box-shadow: 0 4px 18px rgba(0,0,0,.35); display: flex; flex-direction: column; font-size: 14px; color: #111; }
.tk-title { height: 38px; background: #fff; border-bottom: 1px solid #e3e3e3; display: flex; align-items: center; flex-shrink: 0; }
.tk-feather { width: 12px; height: 22px; margin-left: 13px; }
.tk-name { margin-left: 10px; }
.tk-controls { margin-left: auto; display: flex; gap: 45px; margin-right: 24px; }
.tk-controls svg { width: 13px; height: 13px; }
.tk-menu { height: 23px; background: #fff; display: flex; align-items: center; padding-left: 9px; gap: 17px; flex-shrink: 0; font-size: 14.4px; }
.tk-body { flex: 1; display: flex; flex-direction: column; min-height: 0; }
.tk-top { display: flex; align-items: flex-start; padding: 27px 0 0 60px; }
.listbox { width: 455px; height: 205px; background: #000; border: 2px solid #6a6a6a; padding-top: 1px; }
.song { height: 20px; line-height: 20px; color: #006c00; padding-left: 1px; white-space: nowrap; font-size: 14.3px; }
.song-on { background: #008000; color: #001a00; text-decoration: underline; }
.volume { width: 76px; height: 202px; margin: 1px 0 0 25px; padding: 0; border: 1px solid #b0b0b0; box-shadow: 1px 1px 0 #fff; }
.volume legend { margin: 0 auto; padding: 0 1px; line-height: 20px; }
.vslider { display: flex; flex-direction: column; align-items: center; margin-top: 14px; }
.vthumb { width: 30px; height: 14px; background: #0078d7; }
.vtrack { width: 4px; height: 139px; background: #e0e0e0; }
.controls { display: flex; gap: 26px; margin: 26px 0 0 76px; }
.cbtn { width: 64px; height: 64px; }
.hslider { position: relative; width: 448px; height: 30px; margin: 51px 0 0 64px; }
.hslider::before { content: ""; position: absolute; left: 0; right: 0; top: 13px; height: 4px; background: #e0e0e0; }
.hthumb { position: absolute; left: 66px; top: 0; width: 14px; height: 30px; background: #0078d7; }
.tk-status { margin-top: auto; height: 30px; border-top: 2px solid #a8a8a8; border-left: 1px solid #a8a8a8; text-align: right; padding-right: 9px; line-height: 27px; font-size: 13.7px; }

.taskbar { height: 50px; flex-shrink: 0; display: flex; align-items: stretch; color: #fff; background: linear-gradient(90deg, #2a2020 0, #3b3a36 30%, #343230 50%, #3a3835 65%, #2a2a26 80%, #2a2424 100%); }
.tb-start { width: 60px; background: #2a1f20; display: flex; align-items: center; justify-content: center; }
.tb-start svg { width: 20px; height: 20px; }
.tb-search { width: 430px; background: #f0f0f0; border: 1px solid #c8c8c8; border-width: 1px 0; display: flex; align-items: center; color: #333; font-size: 17.8px; }
.tb-search svg { width: 20px; height: 20px; margin: 0 14px 0 16px; }
.tb-slot { width: 60px; display: flex; align-items: center; justify-content: center; }
.tb-sys svg { width: 20px; height: 20px; }
.tb-apps { display: flex; margin-left: 3px; }
.app { width: 62px; display: flex; align-items: center; justify-content: center; position: relative; }
.app svg { width: 32px; height: 34px; }
.app .py { margin-left: 4px; }
.app-run::after { content: ""; position: absolute; left: 5px; right: 5px; bottom: 0; height: 3px; background: #a9d9fb; }
.app-cur { background: #5b5a58; }
.app-cur::after { left: 0; right: 0; }
.tray { margin-left: auto; display: flex; align-items: center; height: 100%; font-size: 14px; color: #f0f0f0; }
.t-slot { width: 30px; display: flex; align-items: center; justify-content: center; }
.t-slot svg { width: 18px; height: 16px; }
.t-pen { width: 40px; display: flex; justify-content: center; }
.t-pen svg { width: 20px; height: 20px; }
.t-lang { width: 44px; text-align: center; }
.t-clock { width: 94px; display: flex; flex-direction: column; align-items: center; line-height: 24px; padding-left: 1px; }
.t-notif { width: 50px; display: flex; justify-content: center; }
.t-notif svg { width: 20px; height: 20px; }
.t-end { width: 15px; height: 100%; border-right: 1px solid #666; }
```
